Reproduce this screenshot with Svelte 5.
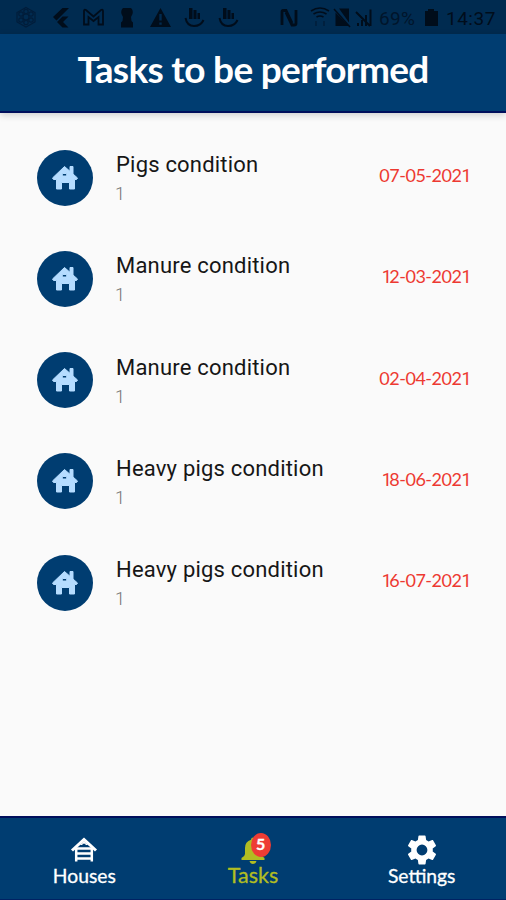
<script lang="ts">
	interface Task {
		title: string;
		house: string;
		date: string;
	}

	const tasks: Task[] = [
		{ title: 'Pigs condition', house: '1', date: '07-05-2021' },
		{ title: 'Manure condition', house: '1', date: '12-03-2021' },
		{ title: 'Manure condition', house: '1', date: '02-04-2021' },
		{ title: 'Heavy pigs condition', house: '1', date: '18-06-2021' },
		{ title: 'Heavy pigs condition', house: '1', date: '16-07-2021' }
	];

	let active = $state('tasks');
</script>

<div class="app">
	<div class="status">
		<svg class="status-icons" width="506" height="34" viewBox="0 0 506 34">
			<!-- notifications -->
			<g fill="none" stroke="#001d3a" stroke-width="1.2">
				<path d="M26 7.5l9 5v9.500l-9 5-9-5v-9.500z" />
				<circle cx="26" cy="17" r="3" />
				<circle cx="26" cy="11.500" r="2.200" />
				<circle cx="26" cy="22.500" r="2.200" />
				<circle cx="21" cy="14" r="2.200" />
				<circle cx="31" cy="14" r="2.200" />
				<circle cx="21" cy="20" r="2.200" />
				<circle cx="31" cy="20" r="2.200" />
			</g>
			<path d="M62.500 8h6.500l-12.500 12.500-3.500-3.500zM62.500 16.500h6l-5.500 5.500 5.500 5.500h-6l-5.500-5.500z" />
			<path d="M84 24.500V11q0-2 2-1l7.500 6.500L101 10q2-1 2 1v13.500h-4.500V17l-5 4-5-4v7.500z" fill="none" stroke="#000d1b" stroke-width="1.800" />
			<path d="M123 8h8q2.500 2.500 1.500 6l-1.500 3 .5 4 1.500 1.500V27.500h-12v-5l1.500-1.500.5-4-1.500-3q-1-3.500 1.500-6z" />
			<path d="M160.500 8l10.500 19h-21zM159.300 14v6.500h2.400V14zM159.300 22.500v2.300h2.400v-2.300z" fill-rule="evenodd" />
			{#each [194, 228] as x}
				<g transform="translate({x} 17)">
					<path d="M-5-9h3.500V2H-5zM-.5-7h3V2h-3zM3.500-4h2.500v6H3.500z" />
					<path d="M-8.500 1Q-7 9 0 9q7 0 9.500-6" fill="none" stroke="#000d1b" stroke-width="2" />
				</g>
			{/each}

			<!-- device state -->
			<path d="M282 25V11.500q0-1.500 2-1h2l6 12.500M296 10v13.500q0 1.500-2 1.500h-2l-6-12.500" fill="none" stroke="#000d1b" stroke-width="2.800" />
			<g fill="none" stroke="#000d1b" stroke-width="1.600">
				<path d="M311 11q9-6 18 0M313.500 14q6.500-4 13 0M316.500 17q3.500-2 7 0" />
				<path d="M316 21v5M324 26v-5" stroke="#001e3b" />
			</g>
			<path d="M339 8.500h10v14zM335.500 12.500l13.500 13.500h-13.500z" />
			<path d="M334 9l16 18" stroke="#000d1b" stroke-width="1.500" />
			<path d="M358 26v-3M362 26v-6M366 26V15M370.500 26V9.500M356 12l14 14" stroke="#000d1b" stroke-width="2" fill="none" />
			<path d="M428 9h6v2h4v15h-13V11h3z" />
		</svg>
		<span class="battery">69%</span>
		<span class="clock">14:37</span>
	</div>

	<header>
		<h1>Tasks to be performed</h1>
	</header>

	<main>
		{#each tasks as task}
			<div class="task">
				<div class="avatar">
					<svg width="28" height="28" viewBox="0 0 28 28">
						<path
							fill="#b5dcff"
							stroke="#b5dcff"
							stroke-width="1"
							stroke-linejoin="round"
							fill-rule="evenodd"
							d="M13.500 2.500l5.500 4.800V2.500h3v7.500l4.500 4-1 1.500h-2V25h-5v-6.500h-8V25h-5V15.500h-3l-1-1.500zM11.300 9.500h4.400v2.500h-4.400z"
						/>
					</svg>
				</div>
				<div class="info">
					<div class="title">{task.title}</div>
					<div class="house">{task.house}</div>
				</div>
				<div class="date">{#each task.date as char}<span class:one={char === '1'}>{char}</span>{/each}</div>
			</div>
		{/each}
	</main>

	<nav>
		<button class="tab houses" class:active={active === 'houses'} onclick={() => (active = 'houses')}>
			<svg width="28" height="26" viewBox="0 0 28 26">
				<path d="M2 13.500L14 2.500l12 11" fill="none" stroke="currentColor" stroke-width="3" />
				<path d="M6.200 11v13.500M21.800 11v13.500M7 11.500h14M7 16.500h14M7 21.500h14" fill="none" stroke="currentColor" stroke-width="2.500" />
				<path d="M10 8L14 4l4 4z" fill="currentColor" />
				<path d="M12.500 7.500h3" stroke="#003d71" stroke-width="1.500" />
			</svg>
			<span>Houses</span>
		</button>
		<button class="tab tasks" class:active={active === 'tasks'} onclick={() => (active = 'tasks')}>
			<svg width="26" height="28" viewBox="0 0 26 28">
				<path
					fill="currentColor"
					d="M13 1.500q1.800 0 2 2.200 6 1.800 6 8.300v6q0 2 3.500 4v2h-23v-2q3.500-2 3.500-4v-6q0-6.500 6-8.300.2-2.200 2-2.200zM9.500 25h7q-.8 3-3.500 3t-3.500-3z"
				/>
			</svg>
			<span>Tasks</span>
			<b class="badge">5</b>
		</button>
		<button class="tab settings" class:active={active === 'settings'} onclick={() => (active = 'settings')}>
			<svg width="36" height="36" viewBox="0 0 24 24">
				<path
					fill="currentColor"
					d="M19.140 12.940c.04-.3.060-.61.060-.94 0-.32-.02-.64-.07-.94l2.030-1.580c.18-.14.23-.41.12-.61l-1.920-3.320c-.12-.22-.37-.29-.59-.22l-2.390.96c-.5-.38-1.030-.7-1.620-.94l-.36-2.540c-.04-.24-.24-.41-.48-.41h-3.840c-.24 0-.43.17-.47.41l-.36 2.540c-.59.24-1.130.57-1.620.94l-2.390-.96c-.22-.08-.47 0-.59.22L2.740 8.870c-.12.21-.08.47.12.61l2.030 1.580c-.05.3-.09.63-.09.94s.02.64.07.94l-2.030 1.580c-.18.14-.23.41-.12.61l1.920 3.320c.12.22.37.29.59.22l2.390-.96c.5.38 1.030.7 1.620.94l.36 2.540c.05.24.24.41.48.41h3.840c.24 0 .44-.17.47-.41l.36-2.540c.59-.24 1.130-.56 1.620-.94l2.390.96c.22.08.47 0 .59-.22l1.920-3.320c.12-.22.07-.47-.12-.61zM12 15.600A3.600 3.600 0 1 1 12 8.400a3.600 3.600 0 0 1 0 7.200z"
				/>
			</svg>
			<span>Settings</span>
		</button>
	</nav>
</div>

<style>
	:global(body) {
		margin: 0;
		background: #fafafa;
	}

	.app {
		display: flex;
		flex-direction: column;
		height: 900px;
		font-family: Lato, 'Liberation Sans', sans-serif;
		background: #fafafa;
	}

	.status {
		position: relative;
		display: flex;
		align-items: center;
		height: 34px;
		box-sizing: border-box;
		padding: 2px 0 0 379px;
		background: #002b50;
		color: #000d1b;
		font-family: Roboto, sans-serif;
		font-size: 19px;
	}

	.status-icons {
		position: absolute;
		top: 0;
		left: 0;
		fill: #000d1b;
	}

	.battery {
		width: 67px;
		color: #00152b;
		letter-spacing: 0.3px;
	}

	.clock {
		letter-spacing: 0.5px;
	}

	header {
		z-index: 1;
		display: flex;
		justify-content: center;
		align-items: center;
		height: 79px;
		box-sizing: border-box;
		border-bottom: 2px solid #000f5c;
		background: #003d71;
		box-shadow: 0 2px 7px rgba(0, 0, 0, 0.18);
	}

	h1 {
		margin: 0;
		padding-bottom: 7px;
		color: #fff;
		font-size: 37px;
		font-weight: 700;
		line-height: 40px;
		letter-spacing: -0.7px;
		white-space: nowrap;
	}

	main {
		flex: 1;
		padding-top: 14px;
	}

	.task {
		display: flex;
		align-items: center;
		height: 101.250px;
		padding: 0 37px;
	}

	.avatar {
		display: flex;
		justify-content: center;
		align-items: center;
		width: 56px;
		height: 56px;
		margin-right: 23px;
		border-radius: 50%;
		background: #003d71;
	}

	.info {
		flex: 1;
		padding-top: 3px;
		font-family: Roboto, sans-serif;
	}

	.title {
		color: #161616;
		font-size: 22px;
		line-height: 30px;
		letter-spacing: 0.200px;
	}

	.house {
		margin-left: -1px;
		color: #757575;
		font-size: 18px;
		font-weight: 300;
		line-height: 28px;
	}

	.date {
		padding-bottom: 4px;
		color: #ed3931;
		font-size: 18px;
		line-height: 22px;
		letter-spacing: -0.500px;
		white-space: nowrap;
	}

	/* slim figure without a foot */
	.one {
		font-family: Roboto, sans-serif;
		letter-spacing: -2.500px;
	}

	nav {
		display: flex;
		height: 84px;
		box-sizing: border-box;
		border-top: 2px solid #000f5c;
		border-bottom: 1px solid #002263;
		background: #003d71;
	}

	.tab {
		position: relative;
		flex: 1;
		display: flex;
		flex-direction: column;
		align-items: center;
		justify-content: flex-end;
		padding: 0 0 11px;
		border: 0;
		background: none;
		color: #fff;
		font: 19.300px/24px Lato, sans-serif;
		-webkit-text-stroke: 0.300px currentColor;
	}

	.houses svg {
		margin-bottom: 1px;
	}

	.settings svg {
		margin-bottom: -4px;
	}

	.tasks {
		padding-bottom: 12px;
		font-size: 21.500px;
	}

	.tasks svg {
		margin-bottom: -1px;
	}

	.active {
		color: #b1bd22;
	}

	.badge {
		position: absolute;
		top: 15px;
		left: 82px;
		width: 20px;
		height: 24px;
		border-radius: 50%;
		background: #ee3c34;
		color: #fff;
		font-size: 16px;
		line-height: 22px;
	}
</style>
